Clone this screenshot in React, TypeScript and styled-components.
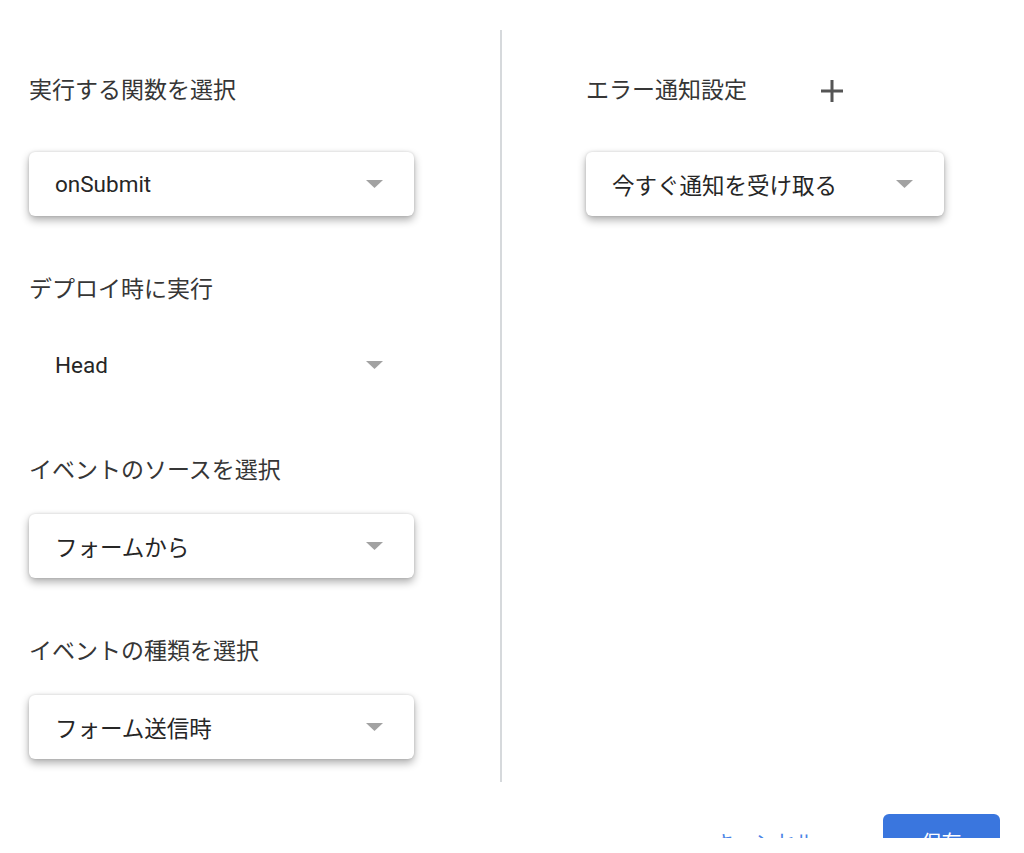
import styled, { createGlobalStyle } from "styled-components";

const GlobalStyle = createGlobalStyle`
  body {
    margin: 0;
    background: #ffffff;
    font-family: Roboto, "Noto Sans CJK JP", sans-serif;
    color: #333333;
  }
`;

// 左カラムの入力項目
const leftFields = [
  { label: "実行する関数を選択", value: "onSubmit", flat: false },
  { label: "デプロイ時に実行", value: "Head", flat: true },
  { label: "イベントのソースを選択", value: "フォームから", flat: false },
  { label: "イベントの種類を選択", value: "フォーム送信時", flat: false },
];

function ArrowIcon() {
  return (
    <svg width="17" height="8" viewBox="0 0 17 8">
      <path d="M0 0 L17 0 L8.5 8 Z" fill="#a2a2a2" />
    </svg>
  );
}

function PlusIcon() {
  return (
    <svg width="22" height="22" viewBox="0 0 22 22">
      <path d="M11 0 V22 M0 11 H22" stroke="#555555" strokeWidth="3" />
    </svg>
  );
}

function App(): JSX.Element {
  return (
    <>
      <GlobalStyle />
      <Page>
        <Columns>
          <Column $inset={29}>
            {leftFields.map((field, i) => (
              <Field key={field.label} $last={i === leftFields.length - 1}>
                <LabelRow $first={i === 0}>
                  <Label>{field.label}</Label>
                </LabelRow>
                <Select $flat={field.flat} $width={385}>
                  <Value>{field.value}</Value>
                  <ArrowIcon />
                </Select>
              </Field>
            ))}
          </Column>
          <Divider />
          <Column $inset={84}>
            <Field $last>
              <LabelRow $first>
                <Label>エラー通知設定</Label>
                <IconButton title="追加">
                  <PlusIcon />
                </IconButton>
              </LabelRow>
              <Select $width={358}>
                <Value>今すぐ通知を受け取る</Value>
                <ArrowIcon />
              </Select>
            </Field>
          </Column>
        </Columns>
        <Footer>
          <TextButton>キャンセル</TextButton>
          <PrimaryButton>保存</PrimaryButton>
        </Footer>
      </Page>
    </>
  );
}
export default App;

const Page = styled.div`
  height: 838px;
  overflow: hidden;
  padding-top: 30px;
  box-sizing: border-box;
  display: flex;
  flex-direction: column;
`;

const Columns = styled.div`
  display: grid;
  grid-template-columns: 500px 2px 1fr;
  height: 752px;
  flex-shrink: 0;
`;

const Column = styled.div<{ $inset: number }>`
  padding: 46px 0 0 ${(p) => p.$inset}px;
  display: flex;
  flex-direction: column;
`;

const Divider = styled.div`
  background: #d6d9dc;
`;

const Field = styled.div<{ $last?: boolean }>`
  display: flex;
  flex-direction: column;
  margin-bottom: ${(p) => (p.$last ? 0 : 59)}px;
`;

const LabelRow = styled.div<{ $first?: boolean }>`
  display: flex;
  align-items: center;
  height: 30px;
  margin-bottom: ${(p) => (p.$first ? 46 : 28)}px;
`;

const Label = styled.span`
  font-size: 23px;
  line-height: 30px;
  color: #363636;
  white-space: nowrap;
`;

const IconButton = styled.button`
  display: flex;
  align-items: center;
  justify-content: center;
  width: 48px;
  height: 48px;
  flex-shrink: 0;
  margin-left: 61px;
  padding: 0;
  border: none;
  background: transparent;
  cursor: pointer;
`;

const Select = styled.div<{ $flat?: boolean; $width: number }>`
  display: flex;
  align-items: center;
  justify-content: space-between;
  box-sizing: border-box;
  width: ${(p) => p.$width}px;
  height: 64px;
  padding: 0 31px 0 26px;
  border-radius: 6px;
  background: #ffffff;
  box-shadow: ${(p) =>
    p.$flat
      ? "none"
      : "0 0 3px rgba(0, 0, 0, 0.14), 0 4px 8px rgba(0, 0, 0, 0.32)"};
`;

const Value = styled.span`
  font-size: 22.5px;
  color: #262626;
  white-space: nowrap;
`;

const Footer = styled.div`
  display: flex;
  justify-content: flex-end;
  align-items: flex-start;
  padding: 32px 24px 0 0;
`;

const TextButton = styled.button`
  height: 54px;
  padding: 0 24px;
  margin-right: 44px;
  border: none;
  background: transparent;
  color: #4a84e6;
  font-family: inherit;
  font-size: 20px;
  cursor: pointer;
`;

const PrimaryButton = styled.button`
  width: 117px;
  height: 54px;
  border: none;
  border-radius: 6px;
  background: #3a76de;
  color: #ffffff;
  font-family: inherit;
  font-size: 20px;
  cursor: pointer;
`;
